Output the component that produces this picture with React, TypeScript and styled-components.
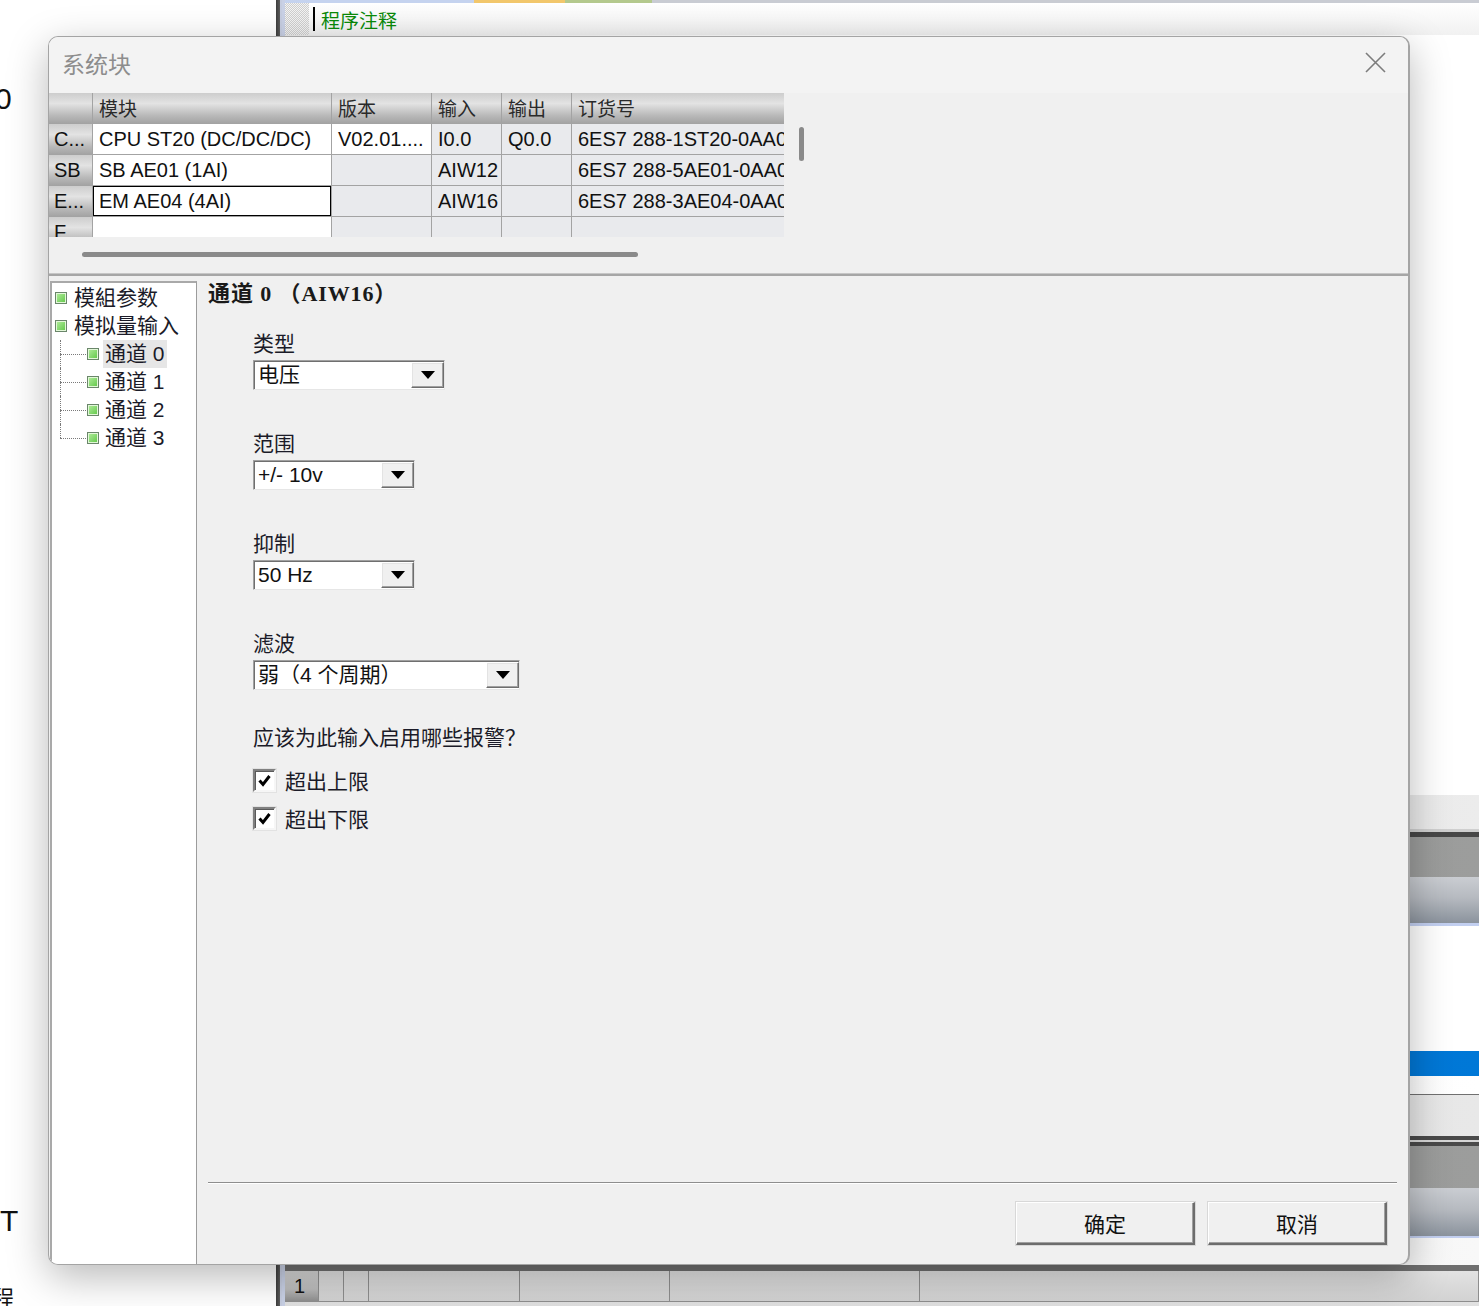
import styled, { createGlobalStyle } from "styled-components";

const CJK = `"Noto Sans CJK SC", sans-serif`;
const UI = `"Liberation Sans", "Noto Sans CJK SC", sans-serif`;

const GlobalStyle = createGlobalStyle`
  html, body {
    margin: 0;
    padding: 0;
    background: #ffffff;
    overflow: hidden;
  }
`;

/* ---------- background application ---------- */

const Page = styled.div`
  position: relative;
  width: 1479px;
  height: 1306px;
  overflow: hidden;
  display: grid;
  grid-template-columns: 276px 6px 1fr;
  font-family: ${UI};
`;

const LeftPane = styled.div`
  display: flex;
  flex-direction: column;
  background: #ffffff;
`;

const Glyph = styled.span<{ $top: number; $size: number; $shift: number }>`
  display: block;
  margin-top: ${(p) => p.$top}px;
  margin-left: ${(p) => p.$shift}px;
  font-size: ${(p) => p.$size}px;
  line-height: 1;
  color: #111;
  font-family: ${UI};
`;

const Splitter = styled.div`
  background: linear-gradient(to right, #3c3c3c, #5a5a5a 60%, #c6cde0 60%);
`;

const Editor = styled.div`
  display: flex;
  flex-direction: column;
  background: #ffffff;
  border-left: 3px solid #c9d1e6;
`;

const TabStrip = styled.div`
  display: flex;
  height: 3px;
`;

const TabMark = styled.span<{ $w?: number; $color: string }>`
  ${(p) => (p.$w ? `width: ${p.$w}px;` : "flex: 1;")}
  background: ${(p) => p.$color};
`;

const CommentRow = styled.div`
  display: flex;
  align-items: center;
  height: 32px;
  background: linear-gradient(#ffffff, #f1f1f1);
`;

const Checker = styled.span`
  align-self: stretch;
  width: 24px;
  background-color: #e4e4e4;
  background-image: repeating-conic-gradient(#cfcfcf 0 25%, #f4f4f4 0 50%);
  background-size: 2px 2px;
`;

const Caret = styled.span`
  width: 2px;
  height: 24px;
  margin-left: 4px;
  background: #000;
`;

const CommentText = styled.span`
  margin-left: 6px;
  font-family: ${CJK};
  font-size: 19px;
  color: #0a8a0a;
`;

const Band = styled.div<{ $h: number; $bg: string }>`
  height: ${(p) => p.$h}px;
  flex-shrink: 0;
  background: ${(p) => p.$bg};
`;

const NetRow = styled.div`
  display: flex;
  height: 30px;
  background: linear-gradient(#e2e2e2, #d2d2d2);
  border-bottom: 1px solid #8e8e8e;
`;

const NetCell = styled.span<{ $w?: number; $head?: boolean }>`
  ${(p) => (p.$w ? `width: ${p.$w}px;` : "flex: 1; border-right: none;")}
  box-sizing: border-box;
  border-right: 1px solid #8e8e8e;
  padding-left: 9px;
  font-size: 20px;
  line-height: 30px;
  color: #111;
  background: ${(p) =>
    p.$head ? "linear-gradient(#d8d8d8, #bdbdbd 60%, #8f8f8f)" : "transparent"};
`;

/* ---------- dialog ---------- */

const Dialog = styled.div`
  position: absolute;
  left: 48px;
  top: 36px;
  width: 1362px;
  height: 1229px;
  box-sizing: border-box;
  border: 1px solid #a4a4a4;
  border-right-width: 2px;
  border-radius: 10px;
  background: #f0f0f0;
  box-shadow: 0 12px 40px rgba(0, 0, 0, 0.28);
  display: flex;
  flex-direction: column;
  overflow: hidden;
  font-family: ${UI};
`;

const TitleBar = styled.div`
  height: 56px;
  box-sizing: border-box;
  flex-shrink: 0;
  display: flex;
  align-items: center;
  justify-content: space-between;
  padding: 0 22px 5px 13px;
  background: #f3f3f3;
`;

const Title = styled.span`
  font-family: ${CJK};
  font-size: 23px;
  color: #8d8d8d;
`;

const CloseButton = styled.button`
  width: 22px;
  height: 22px;
  padding: 0;
  border: none;
  background: transparent;
  display: flex;
  align-items: center;
  justify-content: center;
`;

const TablePane = styled.div`
  height: 180px;
  flex-shrink: 0;
  display: flex;
  flex-direction: column;
`;

const TableRow = styled.div`
  display: flex;
`;

const TableClip = styled.div`
  width: 735px;
  height: 144px;
  overflow: hidden;
  background: #f0f0f0;
`;

const Grid = styled.div`
  display: grid;
  grid-template-columns: 44px 239px 100px 70px 70px 260px;
  grid-auto-rows: 31px;
`;

const HeadCell = styled.div`
  box-sizing: border-box;
  border-right: 1px solid #a3a3a3;
  border-bottom: 1px solid #a3a3a3;
  background: linear-gradient(#cdcdcd, #e3e3e3 35%, #b9b9b9 75%, #a4a4a4);
  padding-left: 6px;
  font-family: ${CJK};
  font-size: 19px;
  line-height: 30px;
  color: #2a2a2a;
  white-space: nowrap;
`;

const RowHead = styled(HeadCell)`
  padding-left: 5px;
  font-family: ${UI};
  font-size: 20px;
  color: #111;
`;

const Cell = styled.div<{ $edit?: boolean; $selected?: boolean }>`
  box-sizing: border-box;
  border-right: 1px solid #a3a3a3;
  border-bottom: 1px solid #a3a3a3;
  background: ${(p) => (p.$edit ? "#ffffff" : "#e9eaed")};
  box-shadow: ${(p) => (p.$selected ? "inset 0 0 0 1px #000" : "none")};
  padding-left: 6px;
  font-size: 20px;
  line-height: 30px;
  color: #111;
  white-space: nowrap;
  overflow: hidden;
`;

const VScroll = styled.div`
  width: 5px;
  height: 34px;
  margin: 34px 0 0 15px;
  border-radius: 3px;
  background: #8a8a8a;
`;

const HScroll = styled.div`
  width: 556px;
  height: 5px;
  margin: 15px 0 0 33px;
  border-radius: 3px;
  background: #8a8a8a;
`;

const PaneDivider = styled.div`
  height: 3px;
  flex-shrink: 0;
  background: linear-gradient(#c6c6c6 0 1px, #a6a6a6 1px);
`;

const Body = styled.div`
  flex: 1;
  display: flex;
  min-height: 0;
`;

/* ---------- tree ---------- */

const Tree = styled.div`
  width: 147px;
  margin: 5px 0 0 1px;
  box-sizing: border-box;
  border-top: 2px solid #a9a9a9;
  border-left: 2px solid #a9a9a9;
  border-right: 1px solid #9c9c9c;
  background: #ffffff;
  padding-top: 1px;
`;

const TreeRow = styled.div<{ $child?: boolean }>`
  display: flex;
  align-items: center;
  height: 28px;
  padding-left: ${(p) => (p.$child ? 8 : 3)}px;
`;

const Connector = styled.span<{ $last?: boolean }>`
  position: relative;
  align-self: stretch;
  width: 26px;
  flex-shrink: 0;

  &::before {
    content: "";
    position: absolute;
    left: 0;
    right: 0;
    top: 50%;
    border-top: 1px dotted #7a7a7a;
  }

  &::after {
    content: "";
    position: absolute;
    left: 0;
    top: 0;
    bottom: ${(p) => (p.$last ? "50%" : "0")};
    border-left: 1px dotted #7a7a7a;
  }
`;

const NodeBox = styled.span<{ $child?: boolean }>`
  width: 10px;
  height: 10px;
  flex-shrink: 0;
  margin-left: ${(p) => (p.$child ? 1 : 0)}px;
  border: 1px solid #6a866a;
  background: linear-gradient(135deg, #b4ee9e, #5ec646);
  box-shadow: inset 0 0 0 1px #e2f7d8;
`;

const NodeLabel = styled.span<{ $child?: boolean; $active?: boolean }>`
  margin-left: ${(p) => (p.$child ? 4 : 7)}px;
  padding: 0 ${(p) => (p.$child ? 2 : 0)}px;
  height: 28px;
  line-height: 28px;
  font-family: ${UI};
  font-size: 21px;
  color: #1b1b28;
  white-space: nowrap;
  background: ${(p) => (p.$active ? "#e6e6e6" : "transparent")};
`;

/* ---------- settings panel ---------- */

const Settings = styled.div`
  flex: 1;
  display: flex;
  flex-direction: column;
  padding: 6px 11px 19px 11px;
`;

const Heading = styled.h2`
  margin: 0;
  font-family: "Liberation Serif", "Noto Sans CJK SC", serif;
  font-size: 22px;
  font-weight: 700;
  line-height: 24px;
  letter-spacing: 0.9px;
  color: #1a1a1a;
`;

const Fields = styled.div`
  display: flex;
  flex-direction: column;
  align-items: flex-start;
  padding: 26px 0 0 45px;
`;

const FieldGroup = styled.div`
  display: flex;
  flex-direction: column;
  margin-bottom: 42px;
`;

const FieldLabel = styled.label`
  font-family: ${UI};
  font-size: 21px;
  line-height: 24px;
  color: #1b1b28;
  margin-bottom: 4px;
`;

const Combo = styled.div<{ $w: number }>`
  width: ${(p) => p.$w}px;
  height: 30px;
  box-sizing: border-box;
  display: flex;
  background: #ffffff;
  border-top: 1px solid #a0a0a0;
  border-left: 1px solid #a0a0a0;
  border-right: 1px solid #e6e6e6;
  border-bottom: 1px solid #e6e6e6;
  box-shadow: inset 1px 1px 0 #6f6f6f;
`;

const ComboValue = styled.span`
  flex: 1;
  padding-left: 4px;
  font-family: ${UI};
  font-size: 21px;
  line-height: 28px;
  color: #111;
  white-space: nowrap;
`;

const ComboButton = styled.span`
  width: 33px;
  margin: 1px 0 1px 0;
  box-sizing: border-box;
  display: flex;
  align-items: center;
  justify-content: center;
  background: #f0f0f0;
  border-top: 1px solid #ffffff;
  border-left: 1px solid #ffffff;
  border-right: 1px solid #6e6e6e;
  border-bottom: 1px solid #6e6e6e;
  box-shadow: inset -1px -1px 0 #a0a0a0, inset 1px 1px 0 #e3e3e3;
`;

const Question = styled.p`
  margin: -6px 0 0;
  font-family: ${UI};
  font-size: 21px;
  line-height: 24px;
  color: #1b1b28;
`;

const CheckRow = styled.label<{ $gap: number }>`
  display: flex;
  align-items: center;
  height: 24px;
  margin-top: ${(p) => p.$gap}px;
  gap: 9px;
  font-family: ${UI};
  font-size: 21px;
  color: #1b1b28;
`;

const CheckBox = styled.span`
  width: 23px;
  height: 23px;
  box-sizing: border-box;
  display: flex;
  align-items: center;
  justify-content: center;
  background: #ffffff;
  border-top: 2px solid #808080;
  border-left: 2px solid #808080;
  border-right: 2px solid #f6f6f6;
  border-bottom: 2px solid #f6f6f6;
  box-shadow: inset 1px 1px 0 #5a5a5a, 0 0 0 1px #e2e2e2;
`;

const Footer = styled.div`
  margin-top: auto;
  display: flex;
  flex-direction: column;
`;

const FooterRule = styled.div`
  height: 1px;
  background: #8e8e8e;
  border-bottom: 1px solid #ffffff;
`;

const ButtonRow = styled.div`
  display: flex;
  justify-content: flex-end;
  gap: 13px;
  padding: 18px 10px 0 0;
`;

const DialogButton = styled.button`
  width: 179px;
  height: 43px;
  box-sizing: border-box;
  background: #f0f0f0;
  border-top: 1px solid #ffffff;
  border-left: 1px solid #ffffff;
  border-right: 2px solid #6d6d6d;
  border-bottom: 2px solid #6d6d6d;
  box-shadow: inset -1px -1px 0 #a0a0a0, 0 0 0 1px #d8d8d8;
  font-family: ${CJK};
  font-size: 21px;
  color: #111;
  padding: 0;
`;

/* ---------- data ---------- */

const modules = [
  { head: "C...", name: "CPU ST20 (DC/DC/DC)", ver: "V02.01....", inp: "I0.0", out: "Q0.0", order: "6ES7 288-1ST20-0AA0", verEdit: true },
  { head: "SB", name: "SB AE01 (1AI)", ver: "", inp: "AIW12", out: "", order: "6ES7 288-5AE01-0AA0" },
  { head: "E...", name: "EM AE04 (4AI)", ver: "", inp: "AIW16", out: "", order: "6ES7 288-3AE04-0AA0", selected: true },
  { head: "F", name: "", ver: "", inp: "", out: "", order: "" },
];

const fields = [
  { label: "类型", value: "电压", width: 192 },
  { label: "范围", value: "+/- 10v", width: 162 },
  { label: "抑制", value: "50 Hz", width: 162 },
  { label: "滤波", value: "弱（4 个周期）", width: 267 },
];

const Arrow = () => (
  <svg width="14" height="8" viewBox="0 0 14 8">
    <path d="M0 0 H14 L7 8 Z" fill="#000" />
  </svg>
);

const Tick = () => (
  <svg width="13" height="13" viewBox="0 0 13 13">
    <path d="M1.5 6.5 L5 10.5 L11.5 2" fill="none" stroke="#000" strokeWidth="3" />
  </svg>
);

const App = () => {
  return (
    <>
      <GlobalStyle />
      <Page>
        <LeftPane>
          <Glyph $top={84} $size={30} $shift={-5}>0</Glyph>
          <Glyph $top={1092} $size={30} $shift={0}>T</Glyph>
          <Glyph $top={52} $size={22} $shift={-8}>程</Glyph>
        </LeftPane>
        <Splitter />
        <Editor>
          <TabStrip>
            <TabMark $w={189} $color="#c5d3ef" />
            <TabMark $w={91} $color="#f2c76c" />
            <TabMark $w={87} $color="#b4c98e" />
            <TabMark $color="#c9ccd3" />
          </TabStrip>
          <CommentRow>
            <Checker />
            <Caret />
            <CommentText>程序注释</CommentText>
          </CommentRow>
          <Band $h={760} $bg="linear-gradient(to right, #ececec, #ffffff 40%)" />
          <Band $h={34} $bg="linear-gradient(to right, #d8d8d8, #ececec)" />
          <Band $h={3} $bg="#cfcfcf" />
          <Band $h={5} $bg="#474747" />
          <Band $h={40} $bg="linear-gradient(to right, #8c8d8c, #9c9d9c)" />
          <Band $h={46} $bg="linear-gradient(#cacdd2, #b6bac0 45%, #8b939d)" />
          <Band $h={3} $bg="#c2cff0" />
          <Band $h={125} $bg="linear-gradient(to right, #eeeeee, #ffffff 50%)" />
          <Band $h={25} $bg="linear-gradient(to right, #0068c0, #0078d7)" />
          <Band $h={18} $bg="linear-gradient(to right, #f0f0f0, #ffffff)" />
          <Band $h={1} $bg="#707070" />
          <Band $h={41} $bg="linear-gradient(to right, #d8d8d8, #e8e8e8)" />
          <Band $h={4} $bg="#4a4a4a" />
          <Band $h={2} $bg="#d6d6d6" />
          <Band $h={4} $bg="#4a4a4a" />
          <Band $h={42} $bg="linear-gradient(to right, #8c8d8c, #9c9d9c)" />
          <Band $h={48} $bg="linear-gradient(#cacdd2, #b6bac0 45%, #8b939d)" />
          <Band $h={2} $bg="#c2cff0" />
          <Band $h={27} $bg="linear-gradient(to right, #e6e6e6, #f8f8f8)" />
          <Band $h={6} $bg="#6f6f6f" />
          <NetRow>
            <NetCell $w={34} $head>1</NetCell>
            <NetCell $w={25} />
            <NetCell $w={25} />
            <NetCell $w={151} />
            <NetCell $w={150} />
            <NetCell $w={250} />
            <NetCell />
          </NetRow>
          <NetRow />
        </Editor>

        <Dialog>
          <TitleBar>
            <Title>系统块</Title>
            <CloseButton aria-label="关闭">
              <svg width="21" height="21" viewBox="0 0 21 21">
                <path d="M1 1 L20 20 M20 1 L1 20" stroke="#7c7c7c" strokeWidth="1.6" />
              </svg>
            </CloseButton>
          </TitleBar>

          <TablePane>
            <TableRow>
              <TableClip>
                <Grid>
                  <HeadCell />
                  <HeadCell>模块</HeadCell>
                  <HeadCell>版本</HeadCell>
                  <HeadCell>输入</HeadCell>
                  <HeadCell>输出</HeadCell>
                  <HeadCell>订货号</HeadCell>
                  {modules.map((m) => (
                    <>
                      <RowHead key={m.head + "h"}>{m.head}</RowHead>
                      <Cell $edit $selected={m.selected}>{m.name}</Cell>
                      <Cell $edit={m.verEdit}>{m.ver}</Cell>
                      <Cell>{m.inp}</Cell>
                      <Cell>{m.out}</Cell>
                      <Cell>{m.order}</Cell>
                    </>
                  ))}
                </Grid>
              </TableClip>
              <VScroll />
            </TableRow>
            <HScroll />
          </TablePane>

          <PaneDivider />

          <Body>
            <Tree>
              <TreeRow>
                <NodeBox />
                <NodeLabel>模組参数</NodeLabel>
              </TreeRow>
              <TreeRow>
                <NodeBox />
                <NodeLabel>模拟量输入</NodeLabel>
              </TreeRow>
              {[0, 1, 2, 3].map((n) => (
                <TreeRow $child key={n}>
                  <Connector $last={n === 3} />
                  <NodeBox $child />
                  <NodeLabel $child $active={n === 0}>
                    通道 {n}
                  </NodeLabel>
                </TreeRow>
              ))}
            </Tree>

            <Settings>
              <Heading>通道 0 （AIW16）</Heading>
              <Fields>
                {fields.map((f) => (
                  <FieldGroup key={f.label}>
                    <FieldLabel>{f.label}</FieldLabel>
                    <Combo $w={f.width}>
                      <ComboValue>{f.value}</ComboValue>
                      <ComboButton>
                        <Arrow />
                      </ComboButton>
                    </Combo>
                  </FieldGroup>
                ))}
                <Question>应该为此输入启用哪些报警？</Question>
                <CheckRow $gap={18}>
                  <CheckBox>
                    <Tick />
                  </CheckBox>
                  超出上限
                </CheckRow>
                <CheckRow $gap={14}>
                  <CheckBox>
                    <Tick />
                  </CheckBox>
                  超出下限
                </CheckRow>
              </Fields>

              <Footer>
                <FooterRule />
                <ButtonRow>
                  <DialogButton>确定</DialogButton>
                  <DialogButton>取消</DialogButton>
                </ButtonRow>
              </Footer>
            </Settings>
          </Body>
        </Dialog>
      </Page>
    </>
  );
};

export default App;
